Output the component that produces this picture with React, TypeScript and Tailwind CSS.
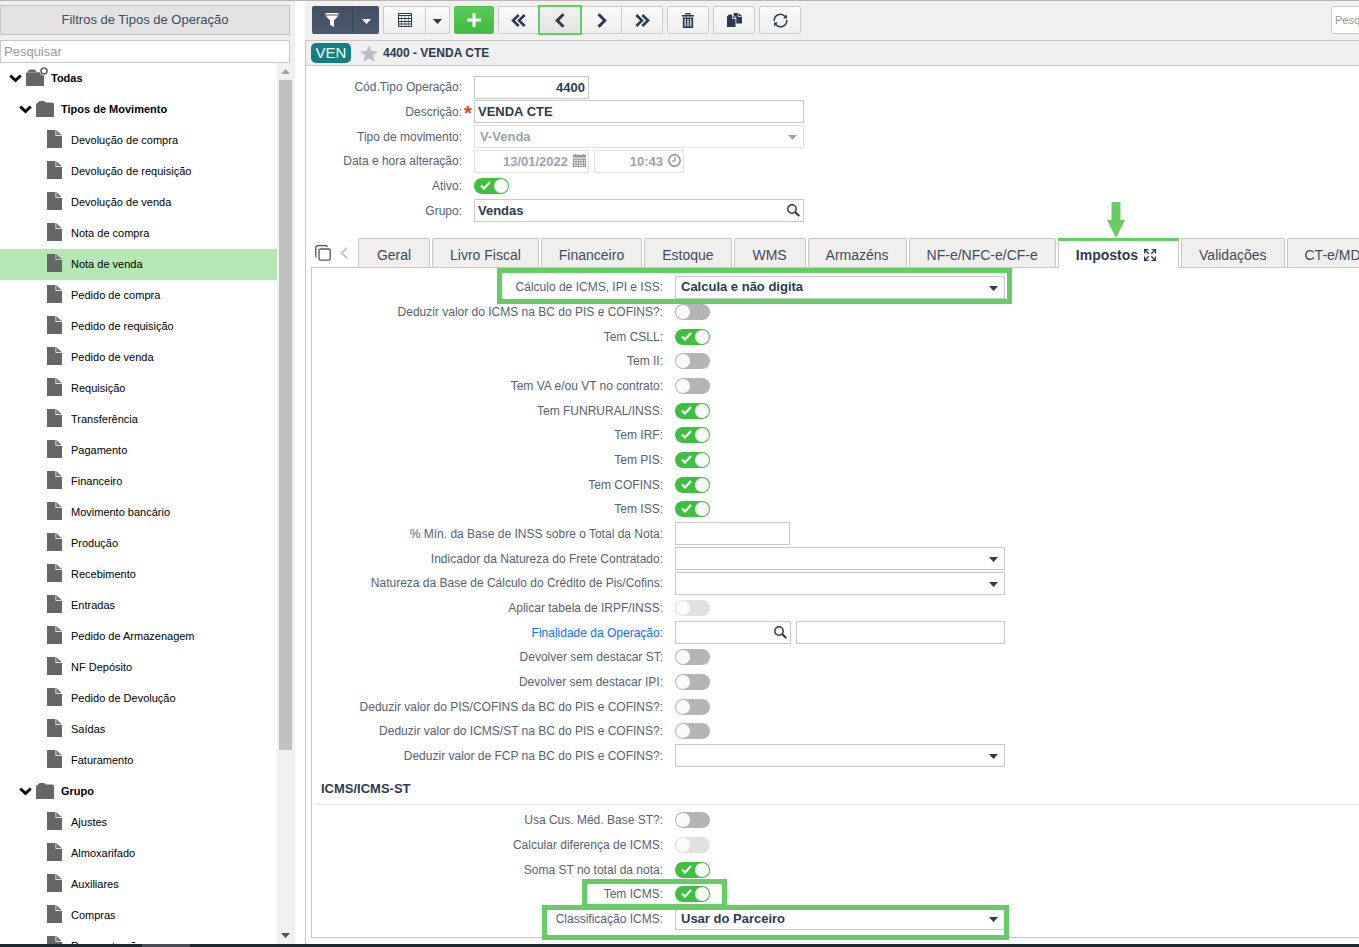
import { useState } from "react";
import type { ReactNode } from "react";
import clsx from "clsx";

const movementTypes = [
  "Devolução de compra",
  "Devolução de requisição",
  "Devolução de venda",
  "Nota de compra",
  "Nota de venda",
  "Pedido de compra",
  "Pedido de requisição",
  "Pedido de venda",
  "Requisição",
  "Transferência",
  "Pagamento",
  "Financeiro",
  "Movimento bancário",
  "Produção",
  "Recebimento",
  "Entradas",
  "Pedido de Armazenagem",
  "NF Depósito",
  "Pedido de Devolução",
  "Saídas",
  "Faturamento",
];

const groups = ["Ajustes", "Almoxarifado", "Auxiliares", "Compras", "Demonstração"];

const tabs = [
  "Geral",
  "Livro Fiscal",
  "Financeiro",
  "Estoque",
  "WMS",
  "Armazéns",
  "NF-e/NFC-e/CF-e",
  "Impostos",
  "Validações",
  "CT-e/MDF-e",
];

/* ---------- icons ---------- */

const ChevronDown = () => (
  <svg width="13" height="9" viewBox="0 0 13 9" className="shrink-0">
    <path d="M1.3 1.5 6.5 6.5 11.7 1.5" fill="none" stroke="#000" strokeWidth="3" />
  </svg>
);

const Folder = () => (
  <svg width="18" height="16" viewBox="0 0 18 16" className="shrink-0">
    <path d="M0 16V4q0-2 2-2.500L3 .5q.3-.5 1-.5h4q.7 0 1 .5l.5 1H16q2 0 2 2V16z" fill="#666" />
  </svg>
);

const FolderRoot = () => (
  <svg width="22" height="19" viewBox="0 0 22 19" className="shrink-0">
    <path d="M0 19V6.500q0-1 1-1.500L3.500 2.500h5L11 5h2.500q1 3.500 4.500 3.500V19z" fill="#666" />
    <path d="M0 5.300h12" stroke="#fff" strokeWidth=".4" />
    <circle cx="18" cy="4" r="3" fill="none" stroke="#666" strokeWidth="1.700" />
  </svg>
);

const FileIcon = () => (
  <svg width="15" height="18" viewBox="0 0 15 18" className="shrink-0">
    <path d="M0 0h8.500v6H15v12H0z" fill="#666" />
    <path d="M9.200 0 15 5.200H9.200z" fill="#777" />
  </svg>
);

const Caret = ({ className }: { className?: string }) => (
  <svg width="9" height="5" viewBox="0 0 9 5" className={className}>
    <path d="M0 0h9L4.500 5z" fill="currentColor" />
  </svg>
);

const SearchIcon = () => (
  <svg width="13" height="13" viewBox="0 0 13 13">
    <circle cx="5" cy="5" r="4.200" fill="none" stroke="#2b3a50" strokeWidth="1.500" />
    <path d="m8 8 4.300 4" stroke="#2b3a50" strokeWidth="2.200" />
  </svg>
);

const CalendarIcon = () => (
  <svg width="13" height="13" viewBox="0 0 13 13">
    <path d="M0 1h13v12H0z" fill="#999" />
    <path d="M2.500 0v2M10.500 0v2" stroke="#999" strokeWidth="2" />
    <path d="M0 4h13" stroke="#fafafa" />
    <path d="M1 6.500h11M1 9h11M1 11.500h11" stroke="#fafafa" strokeWidth="1.500" strokeDasharray="1.500 1" />
  </svg>
);

const ClockIcon = () => (
  <svg width="13" height="13" viewBox="0 0 13 13" fill="none" stroke="#8c8c8c">
    <circle cx="6.500" cy="6.500" r="5.700" strokeWidth="1.500" />
    <path d="M7 3v4H4" strokeWidth="1.200" />
  </svg>
);

const FilterIcon = () => (
  <svg width="14" height="14" viewBox="0 0 14 14" fill="#fff">
    <path d="M.5 0h13v1.500H.5zM.5 2.500h13L9 7.500V14l-4-2.500v-4z" />
  </svg>
);

const GridIcon = () => (
  <svg width="14" height="14" viewBox="0 0 14 14" fill="none" stroke="#2b3a50">
    <path d="M.5.500h13v13H.5z" />
    <path d="M0 2.500h14M0 5.500h14M0 8.500h14M0 11h14" />
    <path d="M3.500 3v11M7 3v11M10.500 3v11" strokeWidth=".5" />
  </svg>
);

const PlusIcon = () => (
  <svg width="14" height="14" viewBox="0 0 14 14">
    <path d="M7 0v14M0 7h14" stroke="#fff" strokeWidth="3" />
  </svg>
);

const Chevron = ({ right, double }: { right?: boolean; double?: boolean }) => (
  <svg
    width={double ? 15 : 10}
    height={double ? 13 : 15}
    viewBox={double ? "0 0 15 13" : "0 0 10 15"}
    className={right ? "rotate-180" : ""}
    fill="none"
    stroke="#2b3a50"
  >
    {double ? (
      <path d="M7.700 1 2 6.500 7.700 12M13.700 1 8 6.500 13.700 12" strokeWidth="2.600" />
    ) : (
      <path d="M8.500 1.200 2.200 7.500 8.500 13.800" strokeWidth="3" />
    )}
  </svg>
);

const TrashIcon = () => (
  <svg width="12" height="15" viewBox="0 0 12 15">
    <path d="M0 2h12v1.600H0z" fill="#2b3a50" />
    <path d="M4 2V.7h4V2" fill="none" stroke="#2b3a50" strokeWidth="1.200" />
    <path d="M.8 4.500h10.400V15H.8z" fill="#2b3a50" />
    <path d="M3.200 6v7.500M6 6v7.500M8.800 6v7.500" stroke="#f6f6f6" strokeWidth="1.200" />
  </svg>
);

const PasteIcon = () => (
  <svg width="15" height="14" viewBox="0 0 15 14" fill="#2b3a50">
    <path d="M6.500 0h4.200v3.800H15V10.500H9.300V5L6.500 2z" />
    <path d="M11.500 0 15 3h-3.500z" />
    <path d="M0 3.500 2 1.500h3V6h3.500v8H0z" />
    <path d="M5.700 2.500 8.500 5.200H5.700z" />
  </svg>
);

const RefreshIcon = () => (
  <svg width="15" height="15" viewBox="0 0 15 15">
    <path d="M1.300 8A6.200 6.200 0 0 1 12.200 3.500M13.700 7A6.200 6.200 0 0 1 2.800 11.500" fill="none" stroke="#2b3a50" strokeWidth="1.500" />
    <path d="M14 1.500v4H10zM1 13.500v-4h4z" fill="#2b3a50" />
  </svg>
);

const ExpandIcon = () => (
  <svg width="12" height="12" viewBox="0 0 12 12" fill="none" stroke="#2b3a50" strokeWidth="1.300">
    <path d="M.6 4.500V.6H4.500M7.500 .6h3.900V4.500M11.400 7.500v3.900H7.500M4.500 11.400H.6V7.500" />
    <path d="m1 1 3.700 3.700M11 1 7.300 4.700M11 11 7.300 7.300M1 11l3.700-3.700" />
  </svg>
);

const CopyOutline = () => (
  <svg width="16" height="16" viewBox="0 0 16 16" fill="none" stroke="#4a5566" strokeWidth="1.300">
    <rect x="4" y="4" width="11.200" height="11.200" rx="1.500" />
    <path d="M1.500 12Q.7 11.500.7 10.500V3Q.7.700 3 .7h7.500q1.500 0 2 1" />
  </svg>
);

/* ---------- form parts ---------- */

const fieldBase = "h-full rounded-none border bg-white px-1 text-[13px] leading-4 font-bold text-[#2b3a50] outline-none";
const enabledBorder = "border-[#c8c8c8]";
const disabledField = "border-[#e2e2e2] bg-[#fafafa] text-[#9aa3af]";

type RowProps = {
  id: string;
  label: string;
  top?: boolean;
  link?: boolean;
  required?: boolean;
  mark?: ReactNode;
  children: ReactNode;
};

const Row = ({ id, label, top, link, required, mark, children }: RowProps) => (
  <div className="relative flex h-[23px] shrink-0 items-center nth-[3n+1]:h-[22px]">
    <label
      htmlFor={id}
      className={clsx(
        "shrink-0 text-right text-xs whitespace-nowrap",
        top ? "w-[156px]" : "w-[351px]",
        link ? "text-[#0d6efd]" : "text-[#566172]"
      )}
    >
      {label}
    </label>
    <span className="w-3 shrink-0 pt-0.5 text-center text-xl leading-4 font-bold text-[#e0412f]">{required && "*"}</span>
    <div className="flex h-[23px] items-center gap-[5px]">{children}</div>
    {mark}
  </div>
);

const Toggle = ({ id, on = false, disabled = false }: { id: string; on?: boolean; disabled?: boolean }) => {
  const [checked, setChecked] = useState(on);
  return (
    <span className={clsx("relative flex h-4 w-[35px]", disabled && "opacity-40")}>
      <input
        id={id}
        type="checkbox"
        checked={checked}
        disabled={disabled}
        onChange={() => setChecked(!checked)}
        className="h-4 w-[35px] appearance-none rounded-full bg-[#b5b5b5] checked:bg-[#3fbf3f]"
      />
      <span
        className={clsx(
          "pointer-events-none absolute top-px size-3.5 rounded-full bg-[#fafafa]",
          checked ? "right-px" : "left-px"
        )}
      />
      {checked && (
        <svg width="11" height="9" viewBox="0 0 11 9" className="pointer-events-none absolute top-[3px] left-1.5">
          <path d="M1 4.500 4 7.500 10 1" fill="none" stroke="#fff" strokeWidth="2.200" />
        </svg>
      )}
    </span>
  );
};

const Select = ({ id, value = "", disabled }: { id: string; value?: string; disabled?: boolean }) => (
  <span className="relative flex h-full w-[330px]">
    <select
      id={id}
      disabled={disabled}
      className={clsx(fieldBase, "w-full appearance-none pl-[5px] opacity-100", disabled ? disabledField : enabledBorder)}
    >
      <option>{value}</option>
    </select>
    <Caret
      className={clsx("pointer-events-none absolute top-[10px] right-[7px]", disabled ? "text-[#9aa3af]" : "text-[#2b3a50]")}
    />
  </span>
);

const SearchField = ({ id, value, className }: { id: string; value?: string; className: string }) => (
  <span className={clsx("relative flex h-full", className)}>
    <input id={id} defaultValue={value} className={clsx(fieldBase, enabledBorder, "w-full pl-[3px]")} />
    <button type="button" aria-label="Procurar" className="absolute top-[5px] right-1">
      <SearchIcon />
    </button>
  </span>
);

/* ---------- sidebar ---------- */

const TreeItem = ({ label, selected }: { label: string; selected?: boolean }) => (
  <li className={clsx("flex h-[31px] shrink-0 items-start gap-[9px] pt-[5px] pl-[47px]", selected && "bg-[#b5e8b5]")}>
    <FileIcon />
    <a href="#" className="pt-0.5 text-[11px] leading-4 text-black">{label}</a>
  </li>
);

const TreeGroup = ({ label }: { label: string }) => (
  <li className="flex h-[31px] shrink-0 items-center pl-[19px]">
    <ChevronDown />
    <span className="mr-[7px] ml-1 pb-0.5"><Folder /></span>
    <span className="text-[11px] font-bold text-black">{label}</span>
  </li>
);

const Sidebar = () => (
  <aside className="flex w-[295px] shrink-0 flex-col bg-[#f1f0f0] pt-1">
    <button type="button" className="mr-[5px] h-[30px] border border-[#c9c4c4] bg-[#e3e3e3] text-[13px] text-[#3d4b60]">
      Filtros de Tipos de Operação
    </button>
    <input
      type="text"
      aria-label="Pesquisar"
      placeholder="Pesquisar"
      className="mt-[5px] mr-[5px] h-[23px] border border-[#c8c8c8] bg-white px-[3px] text-[13px] outline-none placeholder:text-[#999]"
    />
    <div className="flex min-h-0 flex-1">
      <ul className="flex flex-1 flex-col overflow-hidden bg-white">
        <li className="flex h-[31px] shrink-0 items-center pl-[9px]">
          <ChevronDown />
          <span className="ml-1 pb-1"><FolderRoot /></span>
          <span className="ml-[3px] text-[11px] font-bold text-black">Todas</span>
        </li>
        <TreeGroup label="Tipos de Movimento" />
        {movementTypes.map((item) => (
          <TreeItem key={item} label={item} selected={item === "Nota de venda"} />
        ))}
        <TreeGroup label="Grupo" />
        {groups.map((item) => (
          <TreeItem key={item} label={item} />
        ))}
      </ul>
      <div className="flex w-[18px] flex-col items-center bg-[#f1f1f1] pr-px">
        <Caret className="my-[6px] shrink-0 rotate-180 text-[#a3a3a3]" />
        <div className="h-[76%] w-[13px] bg-[#c1c1c1]" />
        <Caret className="mt-auto mb-[6px] shrink-0 text-[#505050]" />
      </div>
    </div>
  </aside>
);

/* ---------- toolbar ---------- */

const toolButton = "flex h-7 items-center justify-center border border-[#cbcbcb] bg-linear-to-b from-[#fafafa] to-[#efefef]";

const Toolbar = () => (
  <div className="flex h-[39px] shrink-0 items-center gap-1 bg-[#f1f0ef] pb-px pl-[7px]">
    <div className="flex">
      <button type="button" aria-label="Filtrar" className="flex h-7 w-[41px] items-center justify-center rounded-l-xs border-r border-[#35445a] bg-linear-to-b from-[#435064] to-[#4d5a6e]">
        <FilterIcon />
      </button>
      <button type="button" aria-label="Opções de filtro" className="flex h-7 w-[26px] items-center justify-center rounded-r-xs bg-linear-to-b from-[#435064] to-[#4d5a6e] pt-0.5 text-white">
        <Caret />
      </button>
    </div>
    <div className="flex">
      <button type="button" aria-label="Modo grade" className={clsx(toolButton, "w-[42px] rounded-l-xs border-r-0")}>
        <GridIcon />
      </button>
      <button type="button" aria-label="Opções da grade" className={clsx(toolButton, "w-[25px] rounded-r-xs pt-0.5 text-[#2b3a50]")}>
        <Caret />
      </button>
    </div>
    <button type="button" aria-label="Novo" className="flex h-7 w-10 items-center justify-center rounded-xs border border-[#4fc04f] bg-linear-to-b from-[#5acb5a] to-[#3fba3f]">
      <PlusIcon />
    </button>
    <div className="flex items-center">
      <button type="button" aria-label="Primeiro" className={clsx(toolButton, "w-10 rounded-l-xs border-r-0")}>
        <Chevron double />
      </button>
      <button type="button" aria-label="Anterior" className="flex h-[30px] w-11 items-center justify-center border-2 border-[#66cc66] bg-linear-to-b from-[#f0f0f0] to-[#e4e4e4]">
        <Chevron />
      </button>
      <button type="button" aria-label="Próximo" className={clsx(toolButton, "w-10 border-l-0")}>
        <Chevron right />
      </button>
      <button type="button" aria-label="Último" className={clsx(toolButton, "w-[41px] rounded-r-xs border-l-0")}>
        <Chevron right double />
      </button>
    </div>
    <button type="button" aria-label="Excluir" className={clsx(toolButton, "w-[42px] rounded-xs")}>
      <TrashIcon />
    </button>
    <button type="button" aria-label="Duplicar" className={clsx(toolButton, "w-[42px] rounded-xs")}>
      <PasteIcon />
    </button>
    <button type="button" aria-label="Atualizar" className={clsx(toolButton, "w-[42px] rounded-xs")}>
      <RefreshIcon />
    </button>
    <input
      type="text"
      aria-label="Pesquisar"
      placeholder="Pesquisar"
      className="ml-auto h-7 w-7 rounded-l-xs border border-r-0 border-[#cbcbcb] bg-white pl-[3px] text-[11px] outline-none placeholder:text-[#999]"
    />
  </div>
);

/* ---------- record ---------- */

const RecordForm = () => (
  <form className="flex flex-col gap-0.5 pt-2.5 pb-4">
    <Row top id="codigo" label="Cód.Tipo Operação:">
      <input id="codigo" defaultValue="4400" className={clsx(fieldBase, enabledBorder, "w-[115px] pr-[3px] text-right")} />
    </Row>
    <Row top id="descricao" label="Descrição:" required>
      <input id="descricao" defaultValue="VENDA CTE" className={clsx(fieldBase, enabledBorder, "w-[330px] pl-[3px]")} />
    </Row>
    <Row top id="movimento" label="Tipo de movimento:">
      <Select id="movimento" value="V-Venda" disabled />
    </Row>
    <Row top id="data" label="Data e hora alteração:">
      <span className="relative flex h-full w-[115px]">
        <input id="data" disabled defaultValue="13/01/2022" className={clsx(fieldBase, disabledField, "w-full pr-5 text-right")} />
        <span className="absolute top-1 right-[3px]"><CalendarIcon /></span>
      </span>
      <span className="relative flex h-full w-[90px]">
        <input aria-label="Hora alteração" disabled defaultValue="10:43" className={clsx(fieldBase, disabledField, "w-full pr-5 text-right")} />
        <span className="absolute top-1 right-[3px]"><ClockIcon /></span>
      </span>
    </Row>
    <Row top id="ativo" label="Ativo:">
      <Toggle id="ativo" on />
    </Row>
    <Row top id="grupo" label="Grupo:">
      <SearchField id="grupo" value="Vendas" className="w-[330px]" />
    </Row>
  </form>
);

const Tabs = () => (
  <div className="flex h-[29px] shrink-0 items-stretch">
    <button type="button" aria-label="Duplicar aba" className="ml-[9px] w-4">
      <CopyOutline />
    </button>
    <button type="button" aria-label="Abas anteriores" className="mr-[10px] ml-[9px] w-2">
      <svg width="8" height="12" viewBox="0 0 8 12">
        <path d="M7 1 1.500 6 7 11" fill="none" stroke="#c4c4c4" strokeWidth="1.800" />
      </svg>
    </button>
    <div role="tablist" className="flex gap-0.5">
      {tabs.map((tab) =>
        tab === "Impostos" ? (
          <button
            key={tab}
            type="button"
            role="tab"
            aria-selected="true"
            className="relative z-10 -mb-px flex items-center gap-1.5 border-x border-t-3 border-x-[#c8c8c8] border-t-[#66cc66] bg-white pr-[22px] pl-[17px] pt-px text-sm font-bold text-[#2b3a50]"
          >
            {tab}
            <ExpandIcon />
            <svg width="18" height="36" viewBox="0 0 18 36" className="absolute -top-[39px] left-12">
              <path d="M4.500 0h9v18H18L9 36 0 18h4.500z" fill="#66cc66" />
            </svg>
          </button>
        ) : (
          <button
            key={tab}
            type="button"
            role="tab"
            aria-selected="false"
            className="min-w-[72px] rounded-t-xs border border-b-0 border-[#c8c8c8] bg-[#f0efee] px-[17px] pt-[3px] text-sm whitespace-nowrap text-[#3d4b60]"
          >
            {tab}
          </button>
        )
      )}
    </div>
  </div>
);

const TaxPanel = () => (
  <div className="ml-[5px] min-h-0 flex-1 border border-r-0 border-[#c8c8c8] bg-white">
    <div className="flex flex-col gap-0.5 pt-2">
      <Row
        id="calculo"
        label="Cálculo de ICMS, IPI e ISS:"
        mark={<span className="pointer-events-none absolute -top-2 -bottom-1.5 left-[185px] w-[515px] border-5 border-[#66cc66]" />}
      >
        <Select id="calculo" value="Calcula e não digita" />
      </Row>
      <Row id="deduzir-icms" label="Deduzir valor do ICMS na BC do PIS e COFINS?:"><Toggle id="deduzir-icms" /></Row>
      <Row id="csll" label="Tem CSLL:"><Toggle id="csll" on /></Row>
      <Row id="ii" label="Tem II:"><Toggle id="ii" /></Row>
      <Row id="va-vt" label="Tem VA e/ou VT no contrato:"><Toggle id="va-vt" /></Row>
      <Row id="funrural" label="Tem FUNRURAL/INSS:"><Toggle id="funrural" on /></Row>
      <Row id="irf" label="Tem IRF:"><Toggle id="irf" on /></Row>
      <Row id="pis" label="Tem PIS:"><Toggle id="pis" on /></Row>
      <Row id="cofins" label="Tem COFINS:"><Toggle id="cofins" on /></Row>
      <Row id="iss" label="Tem ISS:"><Toggle id="iss" on /></Row>
      <Row id="min-inss" label="% Mín. da Base de INSS sobre o Total da Nota:">
        <input id="min-inss" className={clsx(fieldBase, enabledBorder, "w-[115px]")} />
      </Row>
      <Row id="frete" label="Indicador da Natureza do Frete Contratado:"><Select id="frete" /></Row>
      <Row id="natureza" label="Natureza da Base de Cálculo do Crédito de Pis/Cofins:"><Select id="natureza" /></Row>
      <Row id="irpf" label="Aplicar tabela de IRPF/INSS:"><Toggle id="irpf" disabled /></Row>
      <Row id="finalidade" label="Finalidade da Operação:" link>
        <SearchField id="finalidade" className="w-[116px]" />
        <input aria-label="Descrição da finalidade" className={clsx(fieldBase, enabledBorder, "w-[209px]")} />
      </Row>
      <Row id="devolver-st" label="Devolver sem destacar ST:"><Toggle id="devolver-st" /></Row>
      <Row id="devolver-ipi" label="Devolver sem destacar IPI:"><Toggle id="devolver-ipi" /></Row>
      <Row id="deduzir-pis" label="Deduzir valor do PIS/COFINS da BC do PIS e COFINS?:"><Toggle id="deduzir-pis" /></Row>
      <Row id="deduzir-st" label="Deduzir valor do ICMS/ST na BC do PIS e COFINS?:"><Toggle id="deduzir-st" /></Row>
      <Row id="deduzir-fcp" label="Deduzir valor de FCP na BC do PIS e COFINS?:"><Select id="deduzir-fcp" /></Row>
    </div>

    <h2 className="mt-[14px] ml-[5px] border-b border-[#e2e2e2] pb-[7px] pl-1 text-[13px] leading-4 font-bold text-[#2b3a50]">
      ICMS/ICMS-ST
    </h2>

    <div className="flex flex-col gap-0.5 pt-1">
      <Row id="custo-st" label="Usa Cus. Méd. Base ST?:"><Toggle id="custo-st" /></Row>
      <Row id="diferenca" label="Calcular diferença de ICMS:"><Toggle id="diferenca" disabled /></Row>
      <Row id="soma-st" label="Soma ST no total da nota:"><Toggle id="soma-st" on /></Row>
      <Row
        id="tem-icms"
        label="Tem ICMS:"
        mark={<span className="pointer-events-none absolute -top-1 -bottom-1 left-[270px] w-[145px] border-5 border-[#66cc66]" />}
      >
        <Toggle id="tem-icms" on />
      </Row>
      <Row
        id="classificacao"
        label="Classificação ICMS:"
        mark={<span className="pointer-events-none absolute -top-0.5 -bottom-2.5 left-[230px] w-[467px] border-5 border-[#66cc66]" />}
      >
        <Select id="classificacao" value="Usar do Parceiro" />
      </Row>
    </div>
  </div>
);

const App = () => {
  return (
    <div className="flex h-screen flex-col overflow-hidden border-t border-[#b8b4b4] bg-white font-['Liberation_Sans',Arial,sans-serif]">
      <div className="flex min-h-0 flex-1 gap-2.5">
        <Sidebar />
        <main className="flex min-w-0 flex-1 flex-col overflow-hidden">
          <Toolbar />
          <div className="flex min-h-0 flex-1 flex-col border-t border-l border-[#c8c8c8] pb-1.5">
            <header className="flex h-[25px] shrink-0 items-center border-b border-[#c8c8c8] bg-[#efefef] pl-[5px]">
              <span className="flex h-5 w-10 items-center justify-center rounded-[5px] bg-[#128080] text-[15px] text-white">VEN</span>
              <svg width="18" height="17" viewBox="0 0 18 17" className="mr-[5px] ml-[9px]">
                <path d="m9 0 2.400 5.900 6.400.5-4.900 4.100 1.600 6.300L9 13.400l-5.500 3.400 1.600-6.300L.2 6.400l6.400-.5z" fill="#b9bdc4" />
              </svg>
              <h1 className="text-xs font-bold text-[#2b3a50]">4400 - VENDA CTE</h1>
            </header>
            <RecordForm />
            <Tabs />
            <TaxPanel />
          </div>
        </main>
      </div>
      <footer className="flex h-[3px] shrink-0 bg-[#1f2630]">
        <span className="ml-[142px] w-12 bg-[#4a4d55]" />
      </footer>
    </div>
  );
};

export default App;
